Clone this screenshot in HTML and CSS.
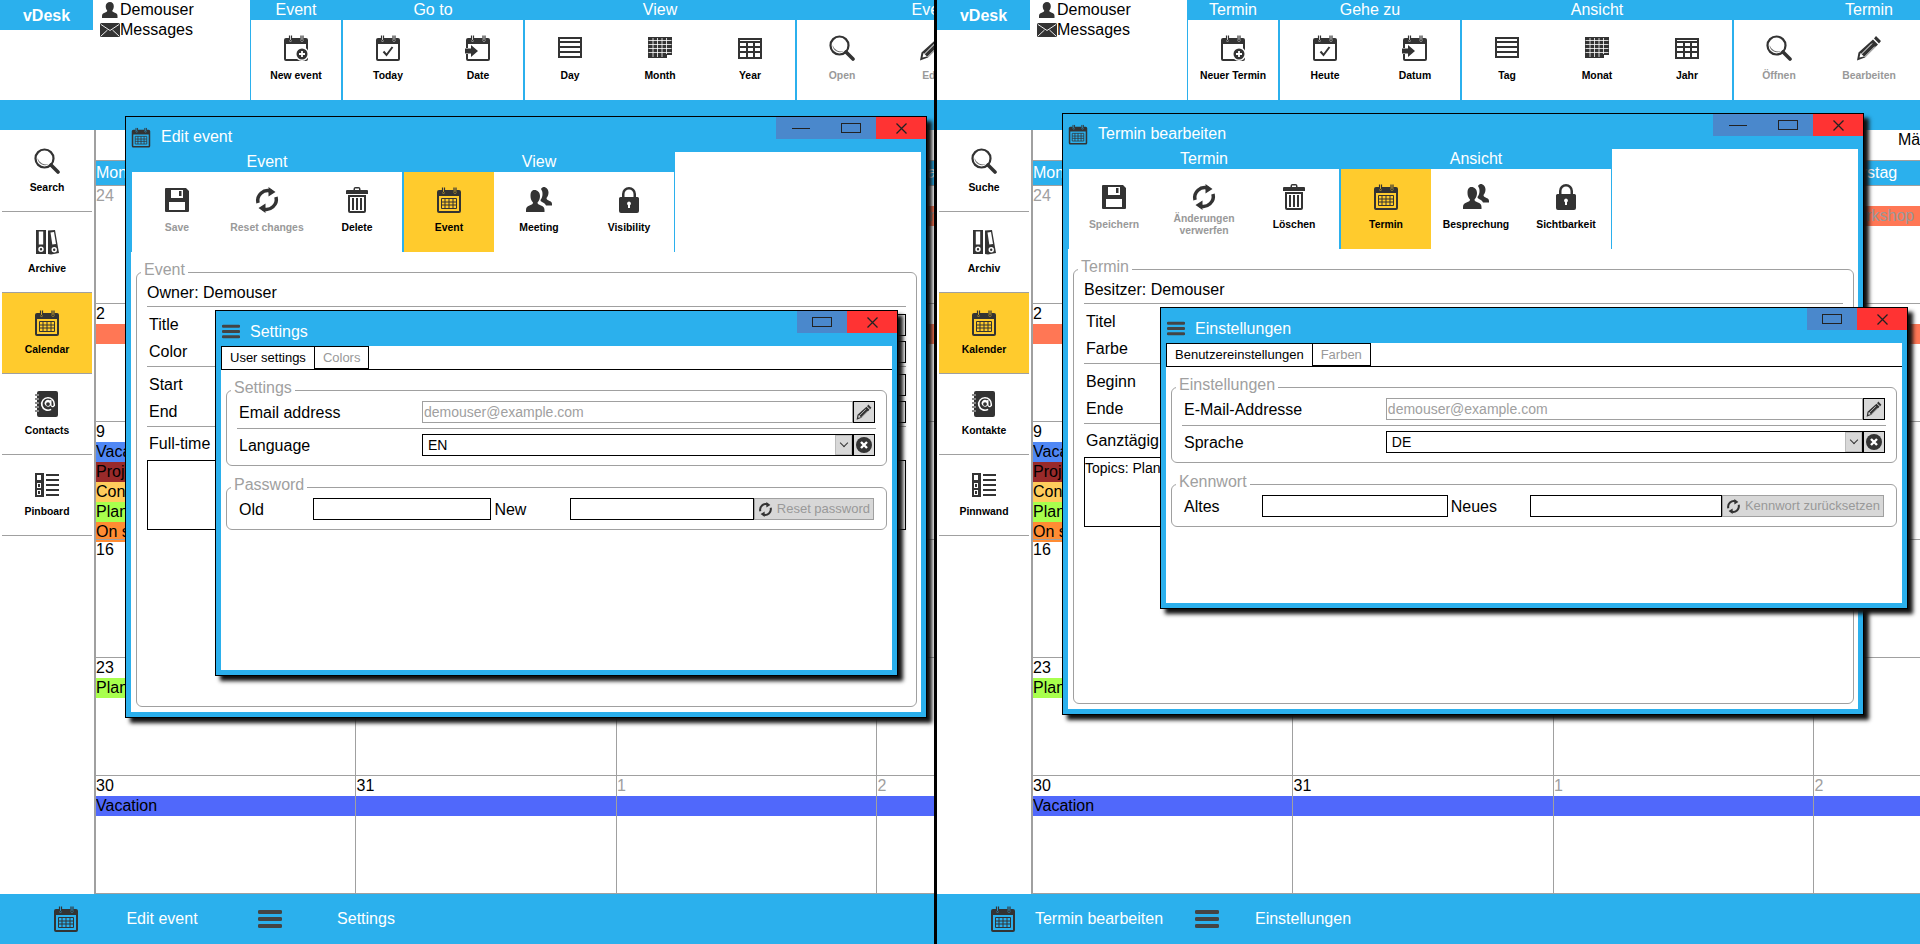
FILE: index.html
```html
<!DOCTYPE html>
<html lang="en">
<head>
    <meta charset="UTF-8">
    <meta name="viewport" content="width=device-width, initial-scale=1.0">
    <title>vDesk</title>
    <link rel="stylesheet" href="styles.css">
</head>
<body>
    <!-- Icon set -->
    <svg class="icon-defs" xmlns="http://www.w3.org/2000/svg">
        <symbol id="i-rings" viewBox="0 0 26 26">
            <path d="M6.5 .5v4a1 1 0 0 0 2 0v-4M18 .5v4a1 1 0 0 0 2 0v-4" fill="none" stroke="#333" stroke-width="1.2"/>
        </symbol>
        <symbol id="i-calendar" viewBox="0 0 26 26">
            <use href="#i-rings"/>
            <path fill="#333" fill-rule="evenodd" d="M3 3h3v2a1.5 1.5 0 0 0 3 0V3h8.500v2a1.500 1.500 0 0 0 3 0V3H23a2 2 0 0 1 2 2v19a2 2 0 0 1-2 2H3a2 2 0 0 1-2-2V5a2 2 0 0 1 2-2ZM3 9v15h20V9Z"/>
            <path d="M5.500 11.500h15v10h-15zM5.500 15h15M5.500 18h15M9 11.500v10M13 11.500v10M17 11.500v10" fill="none" stroke="#333"/>
        </symbol>
        <symbol id="i-cal-new" viewBox="0 0 26 26">
            <use href="#i-rings"/>
            <path fill="#333" fill-rule="evenodd" d="M3 3h3v2a1.500 1.500 0 0 0 3 0V3h8.500v2a1.500 1.500 0 0 0 3 0V3H23a2 2 0 0 1 2 2v19a2 2 0 0 1-2 2H3a2 2 0 0 1-2-2V5a2 2 0 0 1 2-2ZM3 9v15h20V9Z"/>
            <circle cx="19" cy="19" r="7" fill="#fff"/>
            <circle cx="19" cy="19" r="5.500" fill="#333"/>
            <path d="M16 19h6M19 16v6" stroke="#fff" stroke-width="1.800"/>
        </symbol>
        <symbol id="i-cal-check" viewBox="0 0 26 26">
            <use href="#i-rings"/>
            <path fill="#333" fill-rule="evenodd" d="M3 3h3v2a1.500 1.500 0 0 0 3 0V3h8.500v2a1.500 1.500 0 0 0 3 0V3H23a2 2 0 0 1 2 2v19a2 2 0 0 1-2 2H3a2 2 0 0 1-2-2V5a2 2 0 0 1 2-2ZM3 9v15h20V9Z"/>
            <path d="M8.500 16.500l3 3.500 6-8" fill="none" stroke="#333" stroke-width="2"/>
        </symbol>
        <symbol id="i-cal-go" viewBox="0 0 26 26">
            <use href="#i-rings"/>
            <path fill="#333" fill-rule="evenodd" d="M3 3h3v2a1.500 1.500 0 0 0 3 0V3h8.500v2a1.500 1.500 0 0 0 3 0V3H23a2 2 0 0 1 2 2v19a2 2 0 0 1-2 2H3a2 2 0 0 1-2-2v-5h2v5h20V9H3v4H1V5a2 2 0 0 1 2-2Z"/>
            <path fill="#333" d="M0 13.500h6V10l7 6-7 6v-3.500H0Z"/>
        </symbol>
        <symbol id="i-day" viewBox="0 0 26 26">
            <path fill="#333" d="M1 2h24v21H1Z"/>
            <path fill="#fff" d="M3 4h20v2H3ZM3 8h20v3H3ZM3 13h20v3H3ZM3 18h20v3H3Z"/>
        </symbol>
        <symbol id="i-month" viewBox="0 0 26 26">
            <path fill="#333" d="M1 2h24v18h-5v3H1Z"/>
            <path stroke="#fff" stroke-width=".8" d="M1.500 5.500h23M1.500 9.500h23M1.500 13.500h23M1.500 17.500h23M6 3v19M10.500 3v19M15 3v19M19.500 3v16"/>
        </symbol>
        <symbol id="i-year" viewBox="0 0 26 26">
            <path fill="#333" d="M1 3h24v21H1Z"/>
            <path fill="#fff" d="M3 5h20v1H3ZM3 8h6v3H3ZM11 8h5v3h-5ZM18 8h5v3h-5ZM3 13h6v3H3ZM11 13h5v3h-5ZM18 13h5v3h-5ZM3 18h6v4H3ZM11 18h5v4h-5ZM18 18h5v4h-5Z"/>
        </symbol>
        <symbol id="i-search" viewBox="0 0 26 26">
            <circle cx="10.500" cy="10.500" r="9" fill="none" stroke="#333" stroke-width="2.200"/>
            <path d="M3.500 10a7.500 7.500 0 0 0 11.500 6a9 9 0 0 1-11.500-6Z" fill="#666"/>
            <path d="M17 17l7 7" stroke="#333" stroke-width="3.600" stroke-linecap="round"/>
        </symbol>
        <symbol id="i-pencil" viewBox="0 0 26 26">
            <path fill="#333" d="M20 1l5 5-2 2.500-5-5ZM17 4.500l5 5L9 22.500l-8 3 1.500-8ZM4.500 18l-1 4.500 4.500-1Z"/>
            <path d="M16 8.500L5.500 19M19 11.500L8.500 22" stroke="#fff" stroke-width="1"/>
        </symbol>
        <symbol id="i-save" viewBox="0 0 26 26">
            <path fill="#333" fill-rule="evenodd" d="M2 1h20l3 3v20a1 1 0 0 1-1 1H2a1 1 0 0 1-1-1V2a1 1 0 0 1 1-1ZM7 3v8h12V3ZM5 15v8h16v-8Z"/>
            <path fill="#333" d="M15 4h2.500v5H15Z"/>
        </symbol>
        <symbol id="i-reset" viewBox="0 0 26 26">
            <path d="M4 16A10 10 0 0 1 17 4.200M22 10A10 10 0 0 1 9 21.800" fill="none" stroke="#333" stroke-width="3.500"/>
            <path fill="#333" d="M14.500 0l7 5-7 4.500ZM11.500 26l-7-5 7-4.500Z"/>
        </symbol>
        <symbol id="i-trash" viewBox="0 0 26 26">
            <path fill="#333" fill-rule="evenodd" d="M9.500 3V2a2 2 0 0 1 2-2h3a2 2 0 0 1 2 2v1H23a1 1 0 0 1 1 1v3H2V4a1 1 0 0 1 1-1ZM11 3h4V1.500h-4ZM4 8h18v16a2 2 0 0 1-2 2H6a2 2 0 0 1-2-2ZM6 10v14h14V10Z"/>
            <path fill="#333" d="M8 11h2v12H8ZM12 11h2v12h-2ZM16 11h2v12h-2Z"/>
        </symbol>
        <symbol id="i-people" viewBox="0 0 26 26">
            <path fill="#333" d="M17.500 0c3 0 5 2.500 5 5.500 0 2.500-1 4.500-2 5.500 0 1.500 1 2 3 3 2 .8 2.500 1.500 2.500 3.500v1h-6c-.5-1.500-2-2.500-4-3.500-1-.5-1.500-1-1.500-2 1.500-2 2-4 2-6s-.5-3.500-1.500-5c.6-1 1.500-2 2.500-2Z"/>
            <path fill="#333" d="M8.500 3c3 0 5.500 2.500 5.500 6 0 3-1 5-2.500 6.500 0 1.500 1 2 3.500 3 2.500 1 3.500 2 3.500 4.500V25H0v-2c0-2.500 1-3.500 3.500-4.500s3.500-1.500 3.500-3c-1.500-1.500-2.500-3.500-2.500-6.500 0-3.500 1-6 4-6Z"/>
        </symbol>
        <symbol id="i-lock" viewBox="0 0 26 26">
            <path fill="#333" fill-rule="evenodd" d="M6 10V7a7 7 0 0 1 14 0v3h1.500a1.500 1.500 0 0 1 1.500 1.500V24a2 2 0 0 1-2 2H5a2 2 0 0 1-2-2V11.500A1.500 1.500 0 0 1 4.500 10ZM8.500 10h9V7a4.500 4.500 0 0 0-9 0ZM13 14.500a2 2 0 0 0-1 3.700V21h2v-2.800a2 2 0 0 0-1-3.700Z"/>
        </symbol>
        <symbol id="i-archive" viewBox="0 0 26 26">
            <path fill="#333" fill-rule="evenodd" d="M2 1h10v24H2ZM4.800 2.500v13h4.400v-13ZM7 17.500a2.700 2.700 0 1 0 0 5.400 2.700 2.700 0 0 0 0-5.400ZM7 19a1.200 1.200 0 1 1 0 2.400A1.200 1.200 0 0 1 7 19Z"/>
            <path fill="#333" fill-rule="evenodd" d="M14 1.500L21 1l4 23-8 1.500-3-.5ZM16.500 3.500l1.800 12 3.700-.6-2-11.800ZM20.200 18a2.700 2.700 0 1 0 .1 5.400 2.700 2.700 0 0 0-.1-5.400ZM20.200 19.500a1.200 1.200 0 1 1 0 2.400 1.200 1.200 0 0 1 0-2.400Z"/>
        </symbol>
        <symbol id="i-contacts" viewBox="0 0 26 26">
            <path fill="#333" fill-rule="evenodd" d="M5 0h17a2 2 0 0 1 2 2v22a2 2 0 0 1-2 2H5a2 2 0 0 1-2-2V2a2 2 0 0 1 2-2ZM14 6a7 7 0 1 0 3.500 13l-.8-1.300a5.500 5.500 0 1 1 2.800-4.700v1a1 1 0 0 1-2 0V9h-1.300v.6a3.400 3.400 0 1 0 .4 5 2.300 2.300 0 0 0 4.400-1.600V13a7 7 0 0 0-7-7Zm0 5.200a1.900 1.900 0 1 1 0 3.800 1.900 1.900 0 0 1 0-3.800Z"/>
            <path stroke="#888" stroke-width="2" d="M1 4h4M1 8h4M1 12h4M1 16h4M1 20h4"/>
        </symbol>
        <symbol id="i-pinboard" viewBox="0 0 26 26">
            <path fill="#333" fill-rule="evenodd" d="M1 1h9v24H1ZM3 3v5h4V3ZM3 11v5h4v-5ZM3 18v5h4v-5Z"/>
            <path fill="#333" d="M4 12h2v3H4ZM4 19h2v3H4ZM12 2h13v2H12ZM12 7h13v2H12ZM12 12h13v2H12ZM12 17h13v2H12ZM12 22h13v2H12Z"/>
        </symbol>
        <symbol id="i-user" viewBox="0 0 16 16">
            <path fill="#333" d="M8 0c2.400 0 3.800 1.800 3.800 4.200 0 1.800-.7 3.300-1.500 4.300 0 1 .6 1.400 2 2l1.700.7c1 .5 1.500 1.500 1.500 2.800V16H0v-2c0-1.300.5-2.300 1.500-2.800l1.700-.7c1.400-.6 2-1 2-2-.8-1-1.500-2.500-1.500-4.300C3.700 1.800 5.600 0 8 0Z"/>
        </symbol>
        <symbol id="i-mail" viewBox="0 0 20 14">
            <rect width="20" height="14" rx="1.500" fill="#333"/>
            <path d="M1 1.500l9 6 9-6M1 13l6.500-6M19 13l-6.500-6" fill="none" stroke="#fff" stroke-width=".9"/>
        </symbol>
        <symbol id="i-menu" viewBox="0 0 24 18">
            <path d="M1.500 2h21M1.500 9h21M1.500 16h21" stroke="#444" stroke-width="3.800" stroke-linecap="round"/>
        </symbol>
        <symbol id="i-clear" viewBox="0 0 16 16">
            <circle cx="8" cy="8" r="8" fill="#333"/>
            <path d="M5 5l6 6M11 5l-6 6" stroke="#fff" stroke-width="2.400"/>
        </symbol>
        <symbol id="i-x" viewBox="0 0 11 11">
            <path d="M.5 .5l10 10M10.500 .5l-10 10" stroke="#222" stroke-width="1.300"/>
        </symbol>
    </svg>

    <!-- English desktop -->
    <div class="pane">
        <div class="topbar">
            <div class="brand">vDesk</div>
            <div class="account">
                <div class="account-row"><svg class="account-user"><use href="#i-user"/></svg>Demouser</div>
                <div class="account-row"><svg class="account-mail"><use href="#i-mail"/></svg>Messages</div>
            </div>
            <div class="ribbon">
                <div class="group">
                    <div class="group-title">Event</div>
                    <div class="group-tools">
                        <div class="tool"><svg class="tool-icon"><use href="#i-cal-new"/></svg><span class="tool-label">New event</span></div>
                    </div>
                </div>
                <div class="group">
                    <div class="group-title">Go to</div>
                    <div class="group-tools">
                        <div class="tool"><svg class="tool-icon"><use href="#i-cal-check"/></svg><span class="tool-label">Today</span></div>
                        <div class="tool"><svg class="tool-icon"><use href="#i-cal-go"/></svg><span class="tool-label">Date</span></div>
                    </div>
                </div>
                <div class="group">
                    <div class="group-title">View</div>
                    <div class="group-tools">
                        <div class="tool"><svg class="tool-icon"><use href="#i-day"/></svg><span class="tool-label">Day</span></div>
                        <div class="tool"><svg class="tool-icon"><use href="#i-month"/></svg><span class="tool-label">Month</span></div>
                        <div class="tool"><svg class="tool-icon"><use href="#i-year"/></svg><span class="tool-label">Year</span></div>
                    </div>
                </div>
                <div class="group">
                    <div class="group-title">Event</div>
                    <div class="group-tools">
                        <div class="tool off"><svg class="tool-icon"><use href="#i-search"/></svg><span class="tool-label">Open</span></div>
                        <div class="tool off"><svg class="tool-icon"><use href="#i-pencil"/></svg><span class="tool-label">Edit</span></div>
                        <div class="tool off"><svg class="tool-icon"><use href="#i-trash"/></svg><span class="tool-label">Delete</span></div>
                    </div>
                </div>
            </div>
        </div>
        <div class="strip"></div>

        <div class="main">
            <div class="sidebar">
                <div class="tool side"><svg class="tool-icon"><use href="#i-search"/></svg><span class="tool-label">Search</span></div>
                <div class="tool side"><svg class="tool-icon"><use href="#i-archive"/></svg><span class="tool-label">Archive</span></div>
                <div class="tool side on"><svg class="tool-icon"><use href="#i-calendar"/></svg><span class="tool-label">Calendar</span></div>
                <div class="tool side"><svg class="tool-icon"><use href="#i-contacts"/></svg><span class="tool-label">Contacts</span></div>
                <div class="tool side"><svg class="tool-icon"><use href="#i-pinboard"/></svg><span class="tool-label">Pinboard</span></div>
            </div>
            <div class="calendar">
                <div class="cal-month">March 2020</div>
                <div class="cal-days">
                    <div>Monday</div><div>Tuesday</div><div>Wednesday</div><div>Thursday</div><div>Friday</div><div>Saturday</div><div>Sunday</div>
                </div>
                <div class="week">
                    <div class="muted">24</div><div class="muted">25</div><div class="muted">26</div><div class="muted">27</div><div class="muted">28</div><div class="muted">29</div><div>1</div>
                    <div class="ev ev-workshop from-thu">Workshop</div>
                </div>
                <div class="week">
                    <div>2</div><div>3</div><div>4</div><div>5</div><div>6</div><div>7</div><div>8</div>
                    <div class="ev ev-workshop whole"></div>
                </div>
                <div class="week">
                    <div>9</div><div>10</div><div>11</div><div>12</div><div>13</div><div>14</div><div>15</div>
                    <div class="ev ev-holiday first">Vacation</div>
                    <div class="ev ev-project first">Project</div>
                    <div class="ev ev-conference first">Conference</div>
                    <div class="ev ev-planning first">Planning</div>
                    <div class="ev ev-onsite first">On site</div>
                </div>
                <div class="week">
                    <div>16</div><div>17</div><div>18</div><div>19</div><div>20</div><div>21</div><div>22</div>
                </div>
                <div class="week">
                    <div>23</div><div>24</div><div>25</div><div>26</div><div>27</div><div>28</div><div>29</div>
                    <div class="ev ev-planning first">Planning</div>
                </div>
                <div class="week last">
                    <div>30</div><div>31</div><div class="muted">1</div><div class="muted">2</div><div class="muted">3</div><div class="muted">4</div><div class="muted">5</div>
                    <div class="ev ev-vacation whole">Vacation</div>
                </div>
            </div>
        </div>

        <div class="taskbar">
            <div class="task"><svg class="task-cal"><use href="#i-calendar"/></svg><span class="task-name">Edit event</span></div>
            <div class="task"><svg class="task-menu"><use href="#i-menu"/></svg><span class="task-name">Settings</span></div>
        </div>

        <!-- Edit event window -->
        <div class="win win-event">
            <div class="win-head">
                <svg class="win-cal"><use href="#i-calendar"/></svg>
                <div class="win-title">Edit event</div>
                <div class="win-btn"><span class="btn-min"></span></div>
                <div class="win-btn"><span class="btn-max"></span></div>
                <div class="win-btn btn-close"><svg><use href="#i-x"/></svg></div>
            </div>
            <div class="win-body">
                <div class="ribbon">
                    <div class="group">
                        <div class="group-title">Event</div>
                        <div class="group-tools">
                            <div class="tool off"><svg class="tool-icon"><use href="#i-save"/></svg><span class="tool-label">Save</span></div>
                            <div class="tool off"><svg class="tool-icon"><use href="#i-reset"/></svg><span class="tool-label">Reset changes</span></div>
                            <div class="tool"><svg class="tool-icon"><use href="#i-trash"/></svg><span class="tool-label">Delete</span></div>
                        </div>
                    </div>
                    <div class="group">
                        <div class="group-title">View</div>
                        <div class="group-tools">
                            <div class="tool on"><svg class="tool-icon"><use href="#i-calendar"/></svg><span class="tool-label">Event</span></div>
                            <div class="tool"><svg class="tool-icon"><use href="#i-people"/></svg><span class="tool-label">Meeting</span></div>
                            <div class="tool"><svg class="tool-icon"><use href="#i-lock"/></svg><span class="tool-label">Visibility</span></div>
                        </div>
                    </div>
                </div>
                <fieldset class="box box-event">
                    <legend>Event</legend>
                    <div class="owner">Owner: Demouser</div>
                    <div class="form-block">
                        <div class="form-row"><span>Title</span><div class="field"></div></div>
                        <div class="form-row"><span>Color</span><div class="field"></div></div>
                    </div>
                    <div class="form-block">
                        <div class="form-row"><span>Start</span><div class="field"></div></div>
                        <div class="form-row"><span>End</span><div class="field"></div></div>
                    </div>
                    <div class="form-row fulltime"><span>Full-time</span></div>
                    <div class="notes"></div>
                </fieldset>
            </div>
        </div>

        <!-- Settings window -->
        <div class="win win-settings">
            <div class="win-head">
                <svg class="win-menu"><use href="#i-menu"/></svg>
                <div class="win-title">Settings</div>
                <div class="win-btn"><span class="btn-max"></span></div>
                <div class="win-btn btn-close"><svg><use href="#i-x"/></svg></div>
            </div>
            <div class="win-body">
                <div class="tabs">
                    <div class="tab active">User settings</div>
                    <div class="tab">Colors</div>
                </div>
                <fieldset class="box box-settings">
                    <legend>Settings</legend>
                    <div class="set-row line">
                        <label>Email address</label>
                        <div class="set-controls">
                            <div class="input readonly">demouser@example.com</div>
                            <div class="icon-btn"><svg><use href="#i-pencil"/></svg></div>
                        </div>
                    </div>
                    <div class="set-row">
                        <label>Language</label>
                        <div class="set-controls">
                            <div class="input select">EN<span class="arrow"></span></div>
                            <div class="icon-btn"><svg><use href="#i-clear"/></svg></div>
                        </div>
                    </div>
                </fieldset>
                <fieldset class="box box-password">
                    <legend>Password</legend>
                    <div class="pw-row">
                        <div class="pw-field pw-old"><label>Old</label><div class="input"></div></div>
                        <div class="pw-field pw-new"><label>New</label><div class="input"></div></div>
                        <div class="pw-btn"><svg><use href="#i-reset"/></svg>Reset password</div>
                    </div>
                </fieldset>
            </div>
        </div>
    </div>

    <!-- German desktop -->
    <div class="pane">
        <div class="topbar">
            <div class="brand">vDesk</div>
            <div class="account">
                <div class="account-row"><svg class="account-user"><use href="#i-user"/></svg>Demouser</div>
                <div class="account-row"><svg class="account-mail"><use href="#i-mail"/></svg>Messages</div>
            </div>
            <div class="ribbon">
                <div class="group">
                    <div class="group-title">Termin</div>
                    <div class="group-tools">
                        <div class="tool"><svg class="tool-icon"><use href="#i-cal-new"/></svg><span class="tool-label">Neuer Termin</span></div>
                    </div>
                </div>
                <div class="group">
                    <div class="group-title">Gehe zu</div>
                    <div class="group-tools">
                        <div class="tool"><svg class="tool-icon"><use href="#i-cal-check"/></svg><span class="tool-label">Heute</span></div>
                        <div class="tool"><svg class="tool-icon"><use href="#i-cal-go"/></svg><span class="tool-label">Datum</span></div>
                    </div>
                </div>
                <div class="group">
                    <div class="group-title">Ansicht</div>
                    <div class="group-tools">
                        <div class="tool"><svg class="tool-icon"><use href="#i-day"/></svg><span class="tool-label">Tag</span></div>
                        <div class="tool"><svg class="tool-icon"><use href="#i-month"/></svg><span class="tool-label">Monat</span></div>
                        <div class="tool"><svg class="tool-icon"><use href="#i-year"/></svg><span class="tool-label">Jahr</span></div>
                    </div>
                </div>
                <div class="group">
                    <div class="group-title">Termin</div>
                    <div class="group-tools">
                        <div class="tool off"><svg class="tool-icon"><use href="#i-search"/></svg><span class="tool-label">Öffnen</span></div>
                        <div class="tool off"><svg class="tool-icon"><use href="#i-pencil"/></svg><span class="tool-label">Bearbeiten</span></div>
                        <div class="tool off"><svg class="tool-icon"><use href="#i-trash"/></svg><span class="tool-label">Löschen</span></div>
                    </div>
                </div>
            </div>
        </div>
        <div class="strip"></div>

        <div class="main">
            <div class="sidebar">
                <div class="tool side"><svg class="tool-icon"><use href="#i-search"/></svg><span class="tool-label">Suche</span></div>
                <div class="tool side"><svg class="tool-icon"><use href="#i-archive"/></svg><span class="tool-label">Archiv</span></div>
                <div class="tool side on"><svg class="tool-icon"><use href="#i-calendar"/></svg><span class="tool-label">Kalender</span></div>
                <div class="tool side"><svg class="tool-icon"><use href="#i-contacts"/></svg><span class="tool-label">Kontakte</span></div>
                <div class="tool side"><svg class="tool-icon"><use href="#i-pinboard"/></svg><span class="tool-label">Pinnwand</span></div>
            </div>
            <div class="calendar">
                <div class="cal-month">März 2020</div>
                <div class="cal-days">
                    <div>Montag</div><div>Dienstag</div><div>Mittwoch</div><div>Donnerstag</div><div>Freitag</div><div>Samstag</div><div>Sonntag</div>
                </div>
                <div class="week">
                    <div class="muted">24</div><div class="muted">25</div><div class="muted">26</div><div class="muted">27</div><div class="muted">28</div><div class="muted">29</div><div>1</div>
                    <div class="ev ev-workshop from-thu">Workshop</div>
                </div>
                <div class="week">
                    <div>2</div><div>3</div><div>4</div><div>5</div><div>6</div><div>7</div><div>8</div>
                    <div class="ev ev-workshop whole"></div>
                </div>
                <div class="week">
                    <div>9</div><div>10</div><div>11</div><div>12</div><div>13</div><div>14</div><div>15</div>
                    <div class="ev ev-holiday first">Vacation</div>
                    <div class="ev ev-project first">Project</div>
                    <div class="ev ev-conference first">Conference</div>
                    <div class="ev ev-planning first">Planning</div>
                    <div class="ev ev-onsite first">On site</div>
                </div>
                <div class="week">
                    <div>16</div><div>17</div><div>18</div><div>19</div><div>20</div><div>21</div><div>22</div>
                </div>
                <div class="week">
                    <div>23</div><div>24</div><div>25</div><div>26</div><div>27</div><div>28</div><div>29</div>
                    <div class="ev ev-planning first">Planning</div>
                </div>
                <div class="week last">
                    <div>30</div><div>31</div><div class="muted">1</div><div class="muted">2</div><div class="muted">3</div><div class="muted">4</div><div class="muted">5</div>
                    <div class="ev ev-vacation whole">Vacation</div>
                </div>
            </div>
        </div>

        <div class="taskbar">
            <div class="task"><svg class="task-cal"><use href="#i-calendar"/></svg><span class="task-name">Termin bearbeiten</span></div>
            <div class="task"><svg class="task-menu"><use href="#i-menu"/></svg><span class="task-name">Einstellungen</span></div>
        </div>

        <!-- Termin window -->
        <div class="win win-event de">
            <div class="win-head">
                <svg class="win-cal"><use href="#i-calendar"/></svg>
                <div class="win-title">Termin bearbeiten</div>
                <div class="win-btn"><span class="btn-min"></span></div>
                <div class="win-btn"><span class="btn-max"></span></div>
                <div class="win-btn btn-close"><svg><use href="#i-x"/></svg></div>
            </div>
            <div class="win-body">
                <div class="ribbon">
                    <div class="group">
                        <div class="group-title">Termin</div>
                        <div class="group-tools">
                            <div class="tool off"><svg class="tool-icon"><use href="#i-save"/></svg><span class="tool-label">Speichern</span></div>
                            <div class="tool off"><svg class="tool-icon"><use href="#i-reset"/></svg><span class="tool-label">Änderungen verwerfen</span></div>
                            <div class="tool"><svg class="tool-icon"><use href="#i-trash"/></svg><span class="tool-label">Löschen</span></div>
                        </div>
                    </div>
                    <div class="group">
                        <div class="group-title">Ansicht</div>
                        <div class="group-tools">
                            <div class="tool on"><svg class="tool-icon"><use href="#i-calendar"/></svg><span class="tool-label">Termin</span></div>
                            <div class="tool"><svg class="tool-icon"><use href="#i-people"/></svg><span class="tool-label">Besprechung</span></div>
                            <div class="tool"><svg class="tool-icon"><use href="#i-lock"/></svg><span class="tool-label">Sichtbarkeit</span></div>
                        </div>
                    </div>
                </div>
                <fieldset class="box box-event">
                    <legend>Termin</legend>
                    <div class="owner">Besitzer: Demouser</div>
                    <div class="form-block">
                        <div class="form-row"><span>Titel</span><div class="field"></div></div>
                        <div class="form-row"><span>Farbe</span><div class="field"></div></div>
                    </div>
                    <div class="form-block">
                        <div class="form-row"><span>Beginn</span><div class="field"></div></div>
                        <div class="form-row"><span>Ende</span><div class="field"></div></div>
                    </div>
                    <div class="form-row fulltime"><span>Ganztägig</span></div>
                    <div class="notes">Topics: Planning</div>
                </fieldset>
            </div>
        </div>

        <!-- Einstellungen window -->
        <div class="win win-settings de">
            <div class="win-head">
                <svg class="win-menu"><use href="#i-menu"/></svg>
                <div class="win-title">Einstellungen</div>
                <div class="win-btn"><span class="btn-max"></span></div>
                <div class="win-btn btn-close"><svg><use href="#i-x"/></svg></div>
            </div>
            <div class="win-body">
                <div class="tabs">
                    <div class="tab active">Benutzereinstellungen</div>
                    <div class="tab">Farben</div>
                </div>
                <fieldset class="box box-settings">
                    <legend>Einstellungen</legend>
                    <div class="set-row line">
                        <label>E-Mail-Addresse</label>
                        <div class="set-controls">
                            <div class="input readonly">demouser@example.com</div>
                            <div class="icon-btn"><svg><use href="#i-pencil"/></svg></div>
                        </div>
                    </div>
                    <div class="set-row">
                        <label>Sprache</label>
                        <div class="set-controls">
                            <div class="input select">DE<span class="arrow"></span></div>
                            <div class="icon-btn"><svg><use href="#i-clear"/></svg></div>
                        </div>
                    </div>
                </fieldset>
                <fieldset class="box box-password">
                    <legend>Kennwort</legend>
                    <div class="pw-row">
                        <div class="pw-field pw-old"><label>Altes</label><div class="input"></div></div>
                        <div class="pw-field pw-new"><label>Neues</label><div class="input"></div></div>
                        <div class="pw-btn"><svg><use href="#i-reset"/></svg>Kennwort zurücksetzen</div>
                    </div>
                </fieldset>
            </div>
        </div>
    </div>
</body>
</html>
```

FILE: styles.css
```css
/* Global Styles */
* {
    box-sizing: border-box;
}

html, body {
    height: 100%;
}

body {
    display: flex;
    margin: 0;
    overflow: hidden;
    font-family: 'Liberation Sans', Arial, sans-serif;
    font-size: 16px;
    line-height: 20px;
    color: #000;
    background: #fff;
}

.icon-defs {
    position: absolute;
    width: 0;
    height: 0;
}

/* One desktop */
.pane {
    position: relative;
    display: flex;
    flex-direction: column;
    flex: 0 0 934px;
    height: 944px;
    overflow: hidden;
}

.pane + .pane {
    flex: 1 1 0;
    border-left: 3px solid #000;
}

/* Top bar */
.topbar {
    display: flex;
    flex: 0 0 100px;
}

.brand {
    flex: 0 0 93px;
    height: 30px;
    background: #2bb0ed;
    color: #fff;
    font-weight: bold;
    line-height: 31px;
    text-align: center;
}

.account {
    flex: 0 0 157px;
    padding-left: 7px;
}

.account-row {
    display: flex;
    align-items: center;
    height: 20px;
}

.account-user {
    width: 16px;
    height: 16px;
    margin: 0 2px 0 2px;
}

.account-mail {
    width: 20px;
    height: 14px;
}

/* Ribbon */
.ribbon {
    display: flex;
    flex: none;
}

.group {
    flex: none;
    border-left: 1px solid #2bb0ed;
    border-right: 1px solid #2bb0ed;
}

.group-title {
    height: 20px;
    margin: 0 -1px;
    background: #2bb0ed;
    color: #fff;
    text-align: center;
}

.group-tools {
    display: flex;
    background: #fff;
}

.tool {
    display: flex;
    flex-direction: column;
    align-items: center;
    width: 90px;
    height: 80px;
    padding-top: 15px;
    font-size: 10.4px;
    font-weight: bold;
    line-height: 12px;
    text-align: center;
}

.tool.on {
    background: #ffcb2d;
}

.tool.off {
    color: #999;
}

.tool-icon {
    flex: none;
    width: 26px;
    height: 26px;
}

.tool-label {
    display: flex;
    align-items: center;
    height: 24px;
    margin-top: 3px;
}

.strip {
    flex: 0 0 30px;
    background: #2bb0ed;
}

/* Main area */
.main {
    display: flex;
    flex: 1;
    min-height: 0;
}

.sidebar {
    flex: 0 0 94px;
    padding: 1px 2px 0;
}

.tool.side {
    width: 90px;
    height: 81px;
    padding-top: 17px;
    border-bottom: 1px solid #a0a0a0;
}

.side .tool-label {
    margin-top: 2px;
}

/* Calendar */
.calendar {
    flex: 1;
    min-width: 0;
    border-left: 2px solid #a0a0a0;
}

.cal-month {
    height: 30px;
    padding-left: 865px;
    white-space: nowrap;
}

.cal-days {
    display: grid;
    grid-template-columns: repeat(7, 260.5px);
    height: 25px;
    border-top: 1px solid #a0a0a0;
    background: #2bb0ed;
    color: #fff;
    line-height: 24px;
    white-space: nowrap;
}

.week {
    position: relative;
    display: grid;
    grid-template-columns: repeat(7, 260.5px);
    grid-auto-rows: 20px;
    height: 118px;
    border-top: 1px solid #a0a0a0;
}

.week.last {
    height: 119px;
    border-bottom: 1px solid #a0a0a0;
}

/* column lines run over the event bars */
.week::after {
    content: "";
    position: absolute;
    inset: 0;
    background: repeating-linear-gradient(to right, transparent 0, transparent 259.5px, #a0a0a0 259.5px, #a0a0a0 260.5px);
}

.muted {
    color: #a0a0a0;
}

.ev {
    overflow: hidden;
    white-space: nowrap;
}

.ev.first {
    grid-column: 1;
}

.ev.whole {
    grid-column: 1 / -1;
}

.ev.from-thu {
    grid-column: 4 / -1;
    padding-left: 28px;
    color: #999;
}

.ev-workshop {
    background: #ff7755;
}

.ev-holiday {
    background: #5088f5;
}

.ev-vacation {
    background: #5068fb;
}

.ev-project {
    background: #992a2a;
}

.ev-conference {
    background: #ffcc5c;
}

.ev-planning {
    background: #a8ff4d;
}

.ev-onsite {
    background: #ff8c33;
}

/* Task bar */
.taskbar {
    display: flex;
    flex: 0 0 50px;
    gap: 13px;
    padding-left: 53px;
    background: #2bb0ed;
    color: #fff;
}

.task {
    display: flex;
    flex: 0 0 192px;
    align-items: center;
}

.task-cal {
    flex: none;
    width: 26px;
    height: 26px;
}

.task-menu {
    flex: none;
    width: 24px;
    height: 18px;
}

.task-name {
    flex: 1;
    padding-bottom: 1px;
    text-align: center;
    white-space: nowrap;
}

/* Windows */
.win {
    position: absolute;
    display: flex;
    flex-direction: column;
    border: 1px solid #000;
    background: #2bb0ed;
    box-shadow: 5px 5px 4px #111;
}

.win-event {
    top: 116px;
    left: 125px;
    width: 802px;
    height: 602px;
}

.win-event.de {
    top: 113px;
}

.win-settings {
    top: 310px;
    left: 215px;
    width: 683px;
    height: 366px;
}

.win-settings.de {
    top: 307px;
    left: 223px;
    width: 748px;
    height: 302px;
}

.win-head {
    display: flex;
    flex: 0 0 35px;
    align-items: flex-start;
}

.win-cal {
    flex: none;
    width: 20px;
    height: 21px;
    margin: 10px 0 0 5px;
}

.win-menu {
    flex: none;
    width: 18px;
    height: 15px;
    margin: 13px 0 0 6px;
}

.win-title {
    flex: 1;
    padding: 10px 0 0 10px;
    color: #fff;
}

.win-settings .win-title {
    padding-top: 11px;
}

.win-btn {
    display: flex;
    flex: 0 0 50px;
    align-items: center;
    justify-content: center;
    height: 22px;
    background: #4a88cc;
}

.win-btn svg {
    width: 11px;
    height: 11px;
}

.btn-close {
    background: #ff3333;
}

.btn-min {
    width: 18px;
    height: 1px;
    background: #222;
}

.btn-max {
    width: 20px;
    height: 10px;
    border: 1px solid #222;
}

.win-body {
    display: flex;
    flex: 1;
    flex-direction: column;
    min-height: 0;
    margin: 0 5px 5px;
    background: #fff;
}

/* Fieldsets */
.box {
    min-width: 0;
    margin: 0;
    padding: 0 10px;
    border: 1px solid #a0a0a0;
    border-radius: 6px;
}

.box legend {
    margin-left: -6px;
    padding: 0 3px 4px;
    color: #a0a0a0;
    line-height: 16px;
}

/* Edit event form */
.box-event {
    flex: 1;
    margin: 10px 4px 5px 5px;
}

.owner {
    height: 25px;
    padding-top: 1px;
    border-bottom: 1px solid #a0a0a0;
    line-height: 20px;
}

.form-block {
    padding: 4px 0 1px;
    border-bottom: 1px solid #a0a0a0;
}

.form-row {
    display: grid;
    grid-template-columns: 240px 1fr;
    height: 27px;
    align-items: center;
}

.form-row.fulltime {
    height: 33px;
}

.form-row span {
    padding-left: 2px;
}

.field {
    height: 22px;
    border: 1px solid #000;
}

.notes {
    height: 70px;
    border: 1px solid #000;
    font-size: 14px;
}

/* Tabs */
.tabs {
    display: flex;
    flex: 0 0 23px;
    border-bottom: 1px solid #000;
}

.tab {
    height: 23px;
    padding: 0 8px;
    border: solid #000;
    border-width: 1px 1px 1px 0;
    color: #999;
    font-size: 13px;
    line-height: 21px;
}

.tab.active {
    border-width: 1px 1px 0;
    background: #fff;
    color: #000;
}

/* Settings form */
.box-settings {
    margin: 10px 5px 0;
    height: 86px;
}

.set-row {
    display: grid;
    grid-template-columns: 29% 1fr;
    padding: 1px 1px 5px 0;
}

.set-row + .set-row {
    padding-top: 5px;
}

.set-row.line {
    border-bottom: 1px solid #a0a0a0;
}

.set-row label,
.pw-field label {
    padding: 2px 0 0 2px;
}

.set-controls {
    display: flex;
}

.input {
    flex: 1;
    min-width: 0;
    height: 22px;
    padding-left: 5px;
    border: 1px solid #000;
    font-size: 14px;
    line-height: 20px;
}

.input.readonly {
    padding-left: 1px;
    border-color: #a0a0a0;
    color: #a0a0a0;
}

.input.select {
    display: flex;
    justify-content: space-between;
    padding-right: 0;
}

.arrow {
    position: relative;
    flex: 0 0 17px;
    background: #d8d8d8;
    border: 1px solid #bbb;
}

.arrow::after {
    content: "";
    position: absolute;
    top: 4px;
    left: 5px;
    width: 5px;
    height: 5px;
    border: solid #333;
    border-width: 0 1px 1px 0;
    transform: rotate(45deg);
}

.icon-btn {
    display: flex;
    flex: 0 0 22px;
    align-items: center;
    justify-content: center;
    height: 22px;
    border: 1px solid #000;
    background: #d8d8d8;
}

.icon-btn svg {
    width: 16px;
    height: 16px;
}

/* Password form */
.box-password {
    margin: 11px 5px 0;
    height: 53px;
}

.pw-row {
    display: flex;
    padding: 1px 2px 0 0;
}

.pw-field {
    display: grid;
    grid-template-columns: 30% 1fr;
    min-width: 0;
}

.pw-old {
    flex: 255;
}

.pw-new {
    flex: 263;
}

.pw-new label {
    padding-left: 3px;
}

.pw-btn {
    display: flex;
    flex: none;
    align-items: center;
    gap: 4px;
    height: 22px;
    padding: 0 3px;
    border: 1px solid #a0a0a0;
    background: #d8d8d8;
    color: #999;
    font-size: 13px;
    white-space: nowrap;
}

.pw-btn svg {
    width: 15px;
    height: 15px;
}
```
